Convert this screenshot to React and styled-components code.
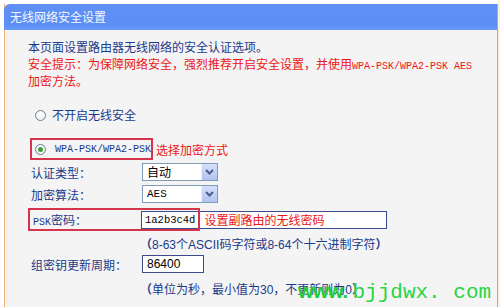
import React from 'react';
import styled, { createGlobalStyle } from 'styled-components';

const Global = createGlobalStyle`
  html, body { margin: 0; padding: 0; background: #fff; }
  body {
    width: 500px; height: 307px; overflow: hidden;
    font-family: "Noto Sans CJK SC", sans-serif;
    font-size: 12px;
  }
`;

const NAVY = '#1b3a8a';
const RED = '#ee1515';
const CJK = '"Noto Sans CJK SC", sans-serif';
const MONO = '"Liberation Mono", "Noto Sans CJK SC", monospace';
const SANS = '"Liberation Sans", "Noto Sans CJK SC", sans-serif';

const Page = styled.div`
  position: relative;
  width: 500px;
  height: 307px;
  padding-top: 4px;
  box-sizing: border-box;
  background: linear-gradient(to right, #fff 0, #fff 498px, #fdf2d6 498px);
  overflow: hidden;
`;

const Panel = styled.div`
  margin-left: 4px;
  width: 494px;
  height: 303px;
  box-sizing: border-box;
  border-left: 1px solid #efb47c;
  border-right: 1px solid #dd9f68;
  background: #f4f4f4;
  box-shadow: inset 2px 0 0 #fdf1e2, inset 4px 0 0 #edf3fa;
`;

const TitleBar = styled.div`
  margin-left: -1px;
  width: calc(100% + 1px);
  height: 26px;
  box-sizing: border-box;
  padding-left: 6px;
  display: flex;
  align-items: center;
  background: linear-gradient(#5e90f6 0, #5c8ef5 80%, #6c9af6 100%);
  border-top-left-radius: 6px;
  color: #f4f7ff;
  font-family: ${CJK};
  font-size: 12px;
  line-height: 14px;
`;

const Content = styled.div`
  padding: 8px 0 0 23px;
  font-family: ${CJK};
  font-size: 12px;
`;

const Line = styled.div`
  height: 17px;
  line-height: 17px;
  color: ${p => (p.$red ? RED : NAVY)};
  white-space: nowrap;
`;

const Mono = styled.span`
  font-family: ${MONO};
  font-size: ${p => p.$size || 10}px;
`;

const RadioRow = styled.div`
  display: flex;
  align-items: center;
  height: 20px;
  margin-top: ${p => p.$mt || 0}px;
  padding-left: 7px;
  gap: 6px;
  color: ${NAVY};
  line-height: 20px;
`;

const RadioDot = styled.span`
  width: 11px;
  height: 11px;
  flex: none;
  border-radius: 50%;
  box-sizing: border-box;
  border: 1px solid #6f7e90;
  background: radial-gradient(circle at 40% 40%, #ffffff 0, #e9ecef 100%);
  display: flex;
  align-items: center;
  justify-content: center;
  &::after {
    content: '';
    width: 5px;
    height: 5px;
    border-radius: 50%;
    background: ${p => (p.$checked ? '#3f9f3a' : 'transparent')};
  }
`;

const ChoiceRow = styled.div`
  display: flex;
  align-items: center;
  margin-top: ${p => p.$mt || 0}px;
  padding-left: 2px;
`;

const MarkedBox = styled.div`
  display: flex;
  align-items: center;
  width: 123px;
  height: 22px;
  box-sizing: border-box;
  border: 2px solid #d5344c;
  padding-left: 3px;
  gap: 9px;
  color: ${NAVY};
`;

const Note = styled.span`
  color: ${RED};
  font-family: ${CJK};
  font-size: 12px;
  margin-left: ${p => p.$ml || 3}px;
  white-space: nowrap;
`;

const FieldRow = styled.div`
  position: relative;
  display: flex;
  align-items: center;
  height: ${p => p.$h || 18}px;
  margin-top: ${p => p.$mt || 0}px;
  padding-left: ${p => p.$indent || 3}px;
`;

const Label = styled.span`
  width: ${p => p.$w || 111}px;
  flex: none;
  color: ${NAVY};
  white-space: nowrap;
`;

const Select = styled.div`
  width: 76px;
  height: 18px;
  box-sizing: border-box;
  border: 1px solid #7f9db9;
  background: #fff;
  display: flex;
`;

const SelectText = styled.span`
  flex: 1;
  padding-left: 4px;
  line-height: 16px;
  color: #000;
  font-family: ${p => (p.$mono ? MONO : CJK)};
  font-size: ${p => (p.$mono ? 11 : 12)}px;
`;

const SelectBtn = styled.span`
  width: 15px;
  background: linear-gradient(#d6e0fc, #b3c3ef);
  border-left: 1px solid #eef2ff;
  display: flex;
  align-items: center;
  justify-content: center;
`;

const Chevron = () => (
  <svg width="9" height="6" viewBox="0 0 9 6">
    <polyline points="1,1 4.5,4.5 8,1" fill="none" stroke="#4a5e8a" strokeWidth="2" />
  </svg>
);

const TextBox = styled.div`
  width: ${p => p.$w}px;
  height: 18px;
  box-sizing: border-box;
  border: 1px solid #3d4a8c;
  background: #fff;
  display: flex;
  align-items: center;
`;

const BoxValue = styled.span`
  padding-left: 4px;
  font-family: ${SANS};
  font-size: 12px;
  color: #000;
`;

const PskValue = styled.span`
  height: 100%;
  box-sizing: border-box;
  border-right: 1px solid #8a4a86;
  padding: 0 3px 0 3px;
  display: flex;
  align-items: center;
  font-family: ${MONO};
  font-size: 10.5px;
  color: #000;
`;

const RedOutline = styled.div`
  position: absolute;
  left: 0;
  top: 0;
  width: 172px;
  height: 23px;
  box-sizing: border-box;
  border: 2px solid #d5344c;
  pointer-events: none;
`;

const Hint = styled.div`
  margin-top: ${p => p.$mt || 0}px;
  padding-left: 112px;
  height: 17px;
  line-height: 17px;
  color: ${NAVY};
  font-family: ${SANS};
  font-size: 12px;
  white-space: nowrap;
`;

const Paren = styled.span`
  font-family: ${CJK};
  font-weight: bold;
`;

const Watermark = styled.div`
  position: absolute;
  left: 298px;
  top: 281px;
  display: flex;
  align-items: baseline;
  color: #27d443;
  line-height: 21px;
  white-space: nowrap;
`;

const WmWww = styled.span`
  font-family: ${SANS};
  font-weight: bold;
  font-size: 20px;
  letter-spacing: -0.5px;
  color: #22cc3c;
`;

const WmRest = styled.span`
  font-family: ${MONO};
  font-size: 21px;
  margin-left: 5px;
`;

export default function App() {
  return (
    <>
      <Global />
      <Page>
        <Panel>
          <TitleBar>无线网络安全设置</TitleBar>
          <Content>
            <Line>本页面设置路由器无线网络的安全认证选项。</Line>
            <Line $red>
              安全提示：为保障网络安全，强烈推荐开启安全设置，并使用<Mono>WPA-PSK/WPA2-PSK AES</Mono>
            </Line>
            <Line $red>加密方法。</Line>

            <RadioRow $mt={16}>
              <RadioDot />
              <span>不开启无线安全</span>
            </RadioRow>

            <ChoiceRow $mt={13}>
              <MarkedBox>
                <RadioDot $checked />
                <Mono>WPA-PSK/WPA2-PSK</Mono>
              </MarkedBox>
              <Note>选择加密方式</Note>
            </ChoiceRow>

            <FieldRow $mt={3}>
              <Label>认证类型：</Label>
              <Select>
                <SelectText>自动</SelectText>
                <SelectBtn><Chevron /></SelectBtn>
              </Select>
            </FieldRow>

            <FieldRow $mt={4}>
              <Label>加密算法：</Label>
              <Select>
                <SelectText $mono>AES</SelectText>
                <SelectBtn><Chevron /></SelectBtn>
              </Select>
            </FieldRow>

            <FieldRow $mt={5} $h={23} $indent={5}>
              <Label $w={108}>
                <Mono $size={10}>PSK</Mono>密码：
              </Label>
              <TextBox $w={246}>
                <PskValue>1a2b3c4d</PskValue>
                <Note $ml={5}>设置副路由的无线密码</Note>
              </TextBox>
              <RedOutline />
            </FieldRow>

            <Hint $mt={4}><Paren>（</Paren>8-63个ASCII码字符或8-64个十六进制字符<Paren>）</Paren></Hint>

            <FieldRow $mt={3}>
              <Label>组密钥更新周期：</Label>
              <TextBox $w={62}>
                <BoxValue>86400</BoxValue>
              </TextBox>
            </FieldRow>

            <Hint $mt={7}><Paren>（</Paren>单位为秒，最小值为30，不更新则为0<Paren>）</Paren></Hint>
          </Content>
        </Panel>
        <Watermark>
          <WmWww>www.</WmWww>
          <WmRest>bjjdwx. com</WmRest>
        </Watermark>
      </Page>
    </>
  );
}
